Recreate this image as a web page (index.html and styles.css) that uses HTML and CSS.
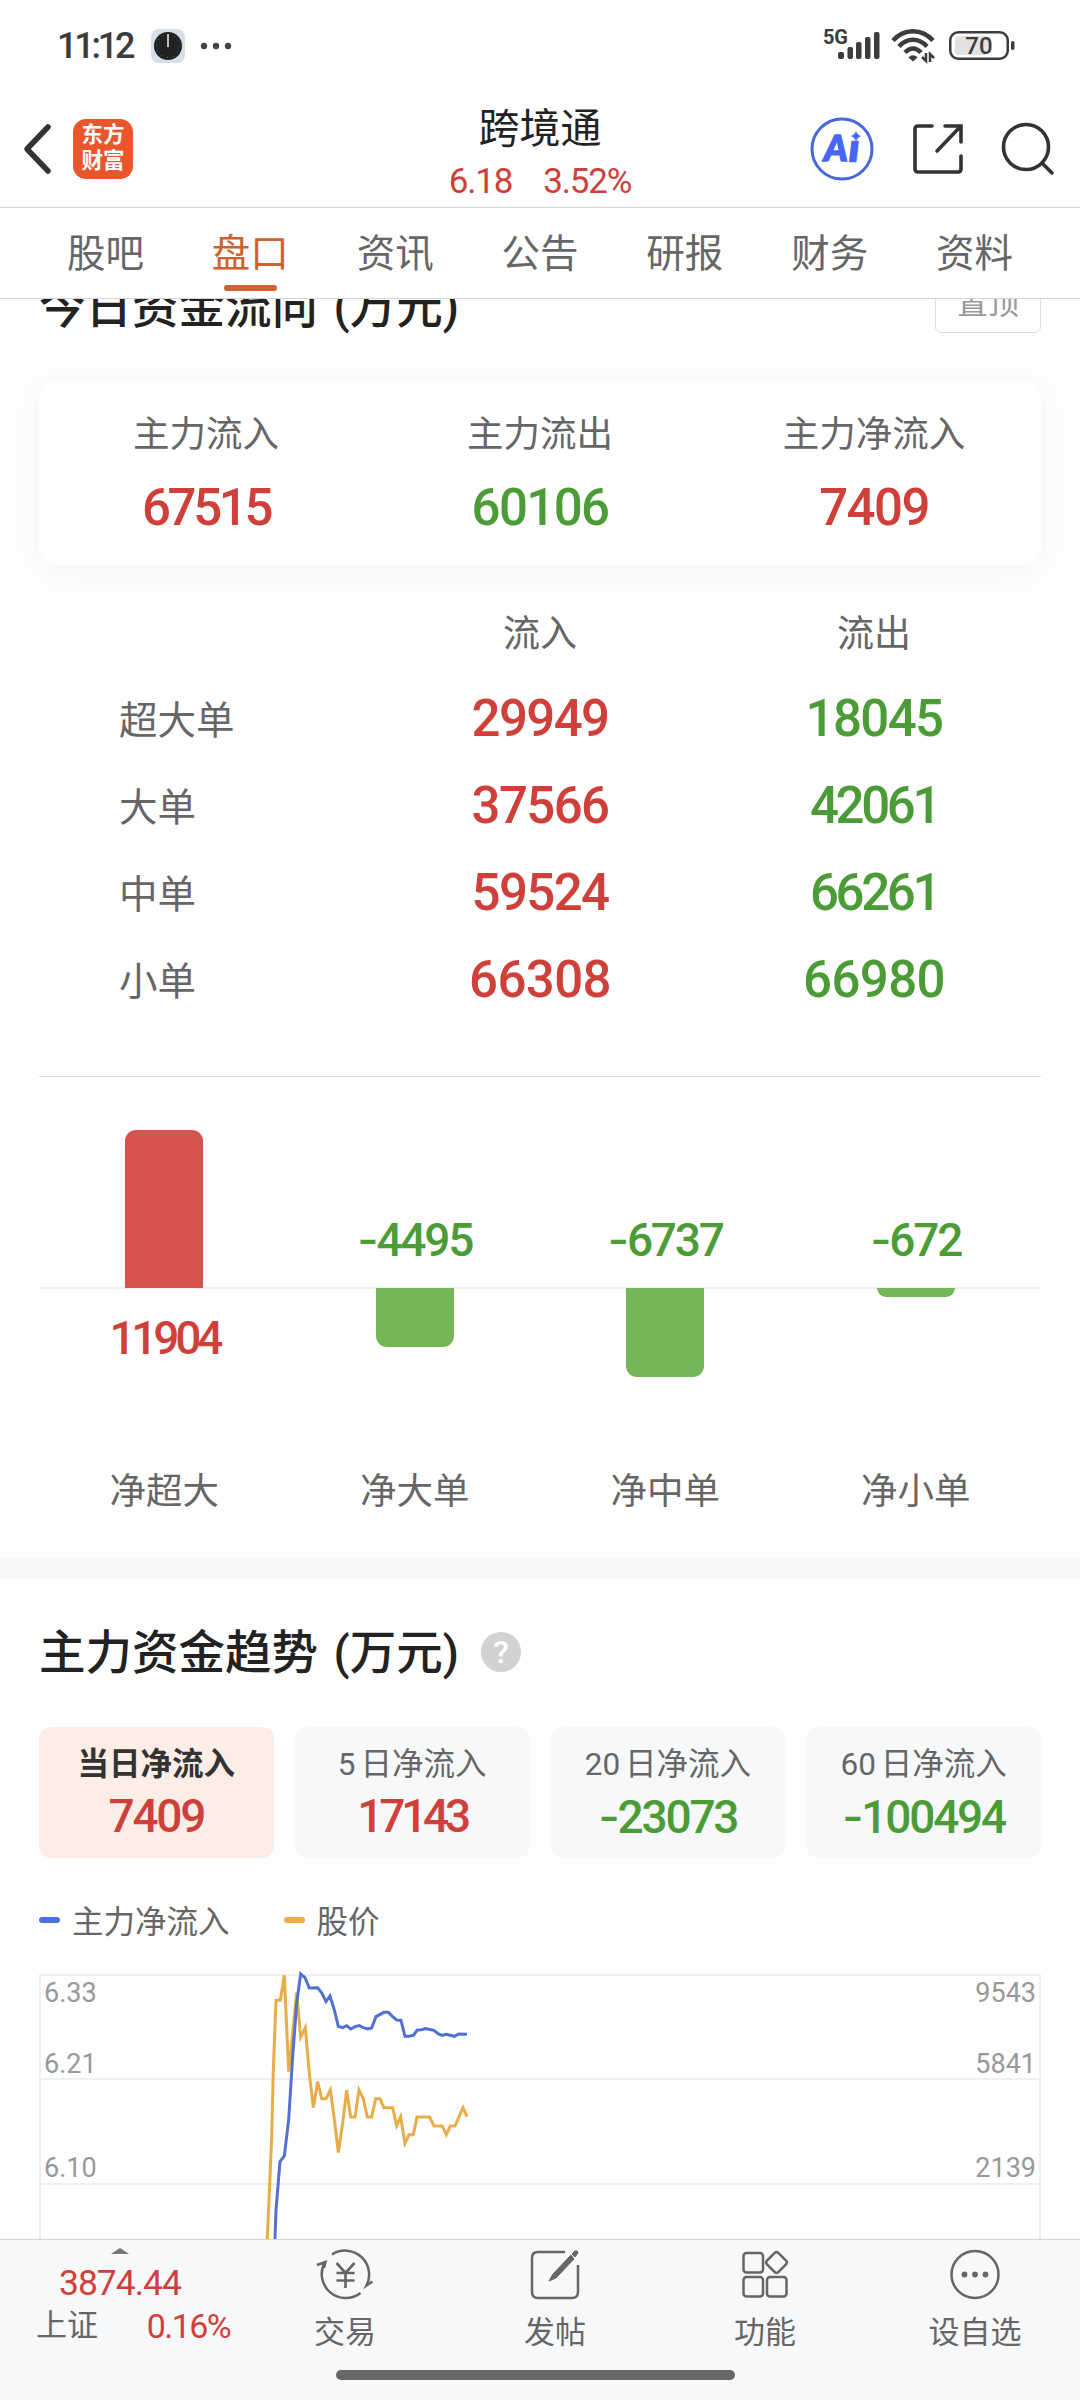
FILE: index.html
```html
<!DOCTYPE html>
<html lang="zh-CN">
<head>
 <meta charset="utf-8">
 <title>跨境通 盘口</title>
 <link rel="stylesheet" href="styles.css">
</head>
<body>
<div class="statusbar">
	<span class="clock">11:12</span>
	<svg class="clock_app" width="34" height="34" viewBox="0 0 34 34">
		<rect width="34" height="34" rx="8" fill="#d5deea"/>
		<circle cx="17" cy="17" r="14" fill="#222"/>
		<circle cx="17" cy="17" r="11.5" fill="none" stroke="#777" stroke-width="1" stroke-dasharray="1 5.02"/>
		<path d="M17 5v13" stroke="#bbb" stroke-width="2"/>
	</svg>
	<svg class="more_dots" width="32" height="8" viewBox="0 0 32 8" fill="#444"><circle cx="4" cy="4" r="3.2"/><circle cx="16" cy="4" r="3.2"/><circle cx="28" cy="4" r="3.2"/></svg>
	<div class="status_right">
		<span class="net">5G</span>
		<svg class="signal" width="42" height="28" viewBox="0 0 42 28" fill="#3c3c3c">
			<rect x="0" y="20" width="6" height="7" rx="2"/><rect x="9.500" y="15" width="5.500" height="12" rx="2"/><rect x="18" y="10" width="5.500" height="17" rx="2"/><rect x="27" y="5" width="5.500" height="22" rx="2"/><rect x="36" y="0" width="5.500" height="27" rx="2"/>
		</svg>
		<svg class="wifi" width="44" height="34" viewBox="0 0 44 34" fill="none" stroke="#3c3c3c" stroke-width="4.500">
			<path d="M2 11.500C13-1 31-1 42 11.500"/><path d="M8 17.500C16 8.500 28 8.500 36 17.500"/><path d="M14 23.500c5-5.500 11-5.500 16 0"/>
			<path d="M17.500 28.500c3-3 6-3 9 0L22 32.500z" fill="#3c3c3c" stroke="none"/>
			<path d="M35 24v8l-4-4M39 33v-8l4 4" stroke-width="2.500"/>
		</svg>
		<svg class="battery" width="66" height="30" viewBox="0 0 66 30">
			<rect x="6" y="5" width="33" height="19" rx="4" fill="#e2e2e2"/>
			<rect x="1.250" y="1.250" width="57.500" height="26.500" rx="8" fill="none" stroke="#3c3c3c" stroke-width="2.500"/>
			<rect x="62" y="10" width="3.500" height="9" rx="1.700" fill="#3c3c3c"/>
			<text x="30" y="22.500" text-anchor="middle" class="battery_text">70</text>
		</svg>
	</div>
</div>

<div class="header">
	<div class="header_left">
		<svg width="30" height="52" viewBox="0 0 30 52" fill="none" stroke="#333" stroke-width="5.500" stroke-linecap="round" stroke-linejoin="round"><path d="M26 4L5 26l21 22"/></svg>
		<div class="logo">东方<br>财富</div>
	</div>
	<div class="header_title">
		<div class="stock">跨境通</div>
		<div class="quote num red"><span>6.18</span><span>3.52%</span></div>
	</div>
	<div class="header_right">
		<svg width="64" height="64" viewBox="0 0 64 64">
			<circle cx="31" cy="32" r="30" fill="#fff" stroke="#4767dc" stroke-width="3"/>
			<text x="13" y="43.500" class="ai_text">A<tspan x="38.500" class="ai_i">ı</tspan></text>
			<path d="M45 14q1.300 4 5 5-3.700 1.300-5 5-1.300-3.700-5-5 3.700-1 5-5z" fill="#4767f0"/>
		</svg>
		<svg width="52" height="52" viewBox="0 0 52 52" fill="none" stroke="#333" stroke-width="3.600" stroke-linecap="round"><path d="M20 3H6Q3 3 3 6v40q0 3 3 3h40q3 0 3-3V33M33 3h16v16M48 4L25 28"/></svg>
		<svg width="54" height="54" viewBox="0 0 54 54" fill="none" stroke="#333" stroke-width="3.600" stroke-linecap="round"><circle cx="25" cy="25" r="22.500"/><path d="M41 41l10 10"/></svg>
	</div>
</div>

<div class="tabs">
	<div class="tab">股吧</div>
	<div class="tab active">盘口</div>
	<div class="tab">资讯</div>
	<div class="tab">公告</div>
	<div class="tab">研报</div>
	<div class="tab">财务</div>
	<div class="tab">资料</div>
</div>

<div class="content">
	<!-- 今日资金流向 -->
	<div class="section flow">
		<div class="flow_head">
			<div class="section_title">今日资金流向 (万元)</div>
			<div class="top_btn">置顶</div>
		</div>
		<div class="summary">
			<div class="summary_item"><div class="label">主力流入</div><div class="num big tight red">67515</div></div>
			<div class="summary_item"><div class="label">主力流出</div><div class="num big green">60106</div></div>
			<div class="summary_item"><div class="label">主力净流入</div><div class="num big red">7409</div></div>
		</div>
		<div class="orders">
			<div class="orders_head"></div><div class="orders_head">流入</div><div class="orders_head">流出</div>
			<div class="orders_name">超大单</div><div class="num big red">29949</div><div class="num big green">18045</div>
			<div class="orders_name">大单</div><div class="num big red">37566</div><div class="num big tight green">42061</div>
			<div class="orders_name">中单</div><div class="num big red">59524</div><div class="num big tight green">66261</div>
			<div class="orders_name">小单</div><div class="num big wide red">66308</div><div class="num big wide green">66980</div>
		</div>
		<div class="bars">
			<div class="bar_col">
				<div class="bar_up"><div class="bar bar_red" style="height:158px"></div></div>
				<div class="bar_down"><div class="num mid tight red">11904</div></div>
				<div class="label">净超大</div>
			</div>
			<div class="bar_col">
				<div class="bar_up"><div class="num mid green"><span class="minus">-</span>4495</div></div>
				<div class="bar_down"><div class="bar bar_green" style="height:59px"></div></div>
				<div class="label">净大单</div>
			</div>
			<div class="bar_col">
				<div class="bar_up"><div class="num mid green"><span class="minus">-</span>6737</div></div>
				<div class="bar_down"><div class="bar bar_green" style="height:89px"></div></div>
				<div class="label">净中单</div>
			</div>
			<div class="bar_col">
				<div class="bar_up"><div class="num mid green"><span class="minus">-</span>672</div></div>
				<div class="bar_down"><div class="bar bar_green" style="height:9px"></div></div>
				<div class="label">净小单</div>
			</div>
		</div>
	</div>

	<div class="split"></div>

	<!-- 主力资金趋势 -->
	<div class="section trend">
		<div class="trend_head">
			<div class="section_title">主力资金趋势 (万元)</div>
			<div class="help">?</div>
		</div>
		<div class="periods">
			<div class="period on"><div class="period_name">当日净流入</div><div class="num mid red">7409</div></div>
			<div class="period"><div class="period_name">5 日净流入</div><div class="num mid tight red">17143</div></div>
			<div class="period"><div class="period_name">20 日净流入</div><div class="num mid green"><span class="minus">-</span>23073</div></div>
			<div class="period"><div class="period_name">60 日净流入</div><div class="num mid green"><span class="minus">-</span>100494</div></div>
		</div>
		<div class="legend">
			<i class="dash blue"></i><span class="legend_flow">主力净流入</span>
			<i class="dash yellow"></i><span>股价</span>
		</div>
		<svg class="chart" width="1002" height="266" viewBox="0 0 1002 266">
			<path d="M1 266V1h1000v265M0 105h1002M0 210h1002" fill="none" stroke="#f0f0f0" stroke-width="2"/>
			<g class="axis">
				<text x="5" y="28">6.33</text><text x="5" y="99">6.21</text><text x="5" y="203">6.10</text>
				<text x="997" y="28" text-anchor="end">9543</text><text x="997" y="99" text-anchor="end">5841</text><text x="997" y="203" text-anchor="end">2139</text>
			</g>
			<g transform="translate(201 -14) scale(.3333)" fill="none" stroke-width="9">
				<polyline stroke="#e8ad49" points="80,860 82,836 88,700 95,530 100,330 108,121 121,121 133,46 146,335 158,220 170,97 182,232 196,203 208,340 220,443 233,365 245,416 258,416 271,390 283,478 295,578 308,490 320,391 332,471 345,471 357,390 370,416 382,471 395,471 407,416 420,416 432,443 458,443 470,497 482,470 495,550 507,524 520,524 531,471 569,471 582,498 607,498 619,524 631,498 645,498 669,443 681,470"/>
				<polyline stroke="#5272d3" points="104,860 105,836 108,750 120,605 133,588 146,480 158,290 170,130 182,42 195,53 208,84 233,83 246,100 258,125 270,108 283,150 295,199 308,203 320,197 332,207 345,200 358,197 370,203 383,207 395,204 408,170 432,157 445,157 458,170 470,180 483,181 495,229 507,229 520,226 532,210 545,209 557,206 582,211 595,222 607,226 619,223 644,229 656,222 681,223"/>
			</g>
		</svg>
	</div>
</div>

<div class="bottombar">
	<div class="index_box">
		<svg width="18" height="6" viewBox="0 0 18 6"><path d="M0 6L9 0l9 6z" fill="#747479"/></svg>
		<div class="num index_price red">3874.44</div>
		<div class="index_row"><span>上证</span><span class="num red index_pct">0.16%</span></div>
	</div>
	<div class="nav_item">
		<svg width="60" height="54" viewBox="0 0 60 54" fill="none" stroke="#666" stroke-width="2.500">
			<path d="M17 7.500A24 24 0 0 1 51.500 38.500l6-4M45.500 46A24 24 0 0 1 10 15M2 18l8.500-3-1.500 6"/>
			<path d="M21.500 16l9 10 9-10M30.500 26v15M21.500 26h18M21.500 33.500h18" stroke-width="2.700"/>
		</svg>
		<span>交易</span>
	</div>
	<div class="nav_item">
		<svg width="60" height="54" viewBox="0 0 60 54" fill="none" stroke="#666" stroke-width="2.500">
			<path d="M40 5H13q-6 0-6 6v34q0 6 6 6h34q6 0 6-6V18"/>
			<path d="M24 34l4-7 18-19 3 4-18 19zM47 7l3-3q3-1 3 2l-3 4z" fill="#666" stroke-width="1"/>
		</svg>
		<span>发帖</span>
	</div>
	<div class="nav_item">
		<svg width="60" height="54" viewBox="0 0 60 54" fill="none" stroke="#666" stroke-width="2.500">
			<rect x="8.500" y="6" width="19.500" height="19.500" rx="3"/><rect x="8.500" y="30" width="19.500" height="19.500" rx="3"/><rect x="32" y="30" width="19.500" height="19.500" rx="3"/>
			<rect x="33.500" y="7.500" width="16" height="16" rx="2.500" transform="rotate(45 41.500 15.500)"/>
		</svg>
		<span>功能</span>
	</div>
	<div class="nav_item">
		<svg width="60" height="54" viewBox="0 0 60 54" fill="none" stroke="#666" stroke-width="2.500">
			<circle cx="30" cy="27.500" r="23.500"/>
			<g fill="#666" stroke="none"><circle cx="19.500" cy="27.500" r="2.900"/><circle cx="30" cy="27.500" r="2.900"/><circle cx="40.500" cy="27.500" r="2.900"/></g>
		</svg>
		<span>设自选</span>
	</div>
	<div class="home_bar"></div>
</div>
</body>
</html>
```
FILE: styles.css
```css
* { box-sizing: border-box; }

body {
	margin: 0;
	width: 1080px;
	height: 2400px;
	overflow: hidden;
	display: flex;
	flex-direction: column;
	background: #fefefe;
	color: #666;
	font-family: Roboto, "Noto Sans CJK SC", sans-serif;
}

svg { display: block; flex: none; overflow: visible; }

.num { font-family: Roboto, "Noto Sans CJK SC", sans-serif; font-weight: 500; white-space: nowrap; }
.big { font-size: 51px; letter-spacing: -1.6px; }
.mid { font-size: 46px; letter-spacing: -2.2px; }
.big.tight { letter-spacing: -3.4px; }
.big.wide { letter-spacing: -.6px; }
.mid.tight { letter-spacing: -4.2px; }
.minus { font-family: Inter, sans-serif; }
.red { color: #d0403a; }
.green { color: #4b9c36; }
.label { font-size: 36.5px; }

/* status bar */
.statusbar {
	flex: none;
	height: 92px;
	padding: 0 65px 0 57px;
	display: flex;
	align-items: center;
}
.clock { width: 94px; font-size: 36px; font-weight: 500; letter-spacing: -3.2px; color: #3c3c3c; }
.more_dots { margin-left: 15px; }
.status_right { margin-left: auto; display: flex; align-items: center; }
.net { align-self: flex-start; margin-top: -4px; font-size: 20px; line-height: 24px; font-weight: 700; color: #3c3c3c; }
.signal { margin-left: -10px; }
.wifi { margin-left: 11px; }
.battery { margin-left: 14px; }
.battery_text { font-size: 24px; font-weight: 500; fill: #3c3c3c; }

/* header */
.header {
	flex: none;
	height: 116px;
	border-bottom: 1px solid #d4d6d6;
	display: grid;
	grid-template-columns: 300px 1fr 300px;
}
.header_left { display: flex; align-items: center; padding: 0 0 2px 22px; }
.logo {
	width: 60px;
	height: 60px;
	margin-left: 21px;
	padding-top: 3px;
	border-radius: 13px;
	background: #e9562b;
	color: #fff;
	font-size: 21.5px;
	line-height: 26px;
	font-weight: 700;
	text-align: center;
}
.header_title { text-align: center; }
.stock { padding-top: 7px; font-size: 41px; line-height: 60px; color: #222; }
.quote { font-size: 35px; line-height: 46px; letter-spacing: -1.2px; font-weight: 400; display: flex; justify-content: center; gap: 31px; }
.header_right { display: flex; align-items: center; justify-content: flex-end; gap: 37px; padding: 0 25px 2px 0; }
.ai_text { font-family: Lato, sans-serif; font-size: 36px; font-weight: 900; font-style: italic; fill: #4767f0; stroke: #4767f0; stroke-width: 1.5px; }
.ai_i { stroke-width: 2.5px; }

/* tabs */
.tabs {
	flex: none;
	height: 91px;
	padding: 0 33px;
	display: flex;
	border-bottom: 1px solid #d4d6d6;
}
.tab { flex: 1; display: flex; flex-direction: column; align-items: center; font-size: 38.5px; line-height: 56px; padding-top: 18px; }
.active { color: #cb6230; }
.active::after { content: ""; width: 53px; height: 6px; margin-top: 3px; border-radius: 3px; background: #cb6230; }

/* scrolled content */
.content { flex: 1; min-height: 0; overflow: hidden; }
.section { padding: 0 39px; }
.section_title { font-size: 46.5px; line-height: 60px; font-weight: 500; word-spacing: 4px; color: #222; white-space: nowrap; }

.flow_head { display: flex; justify-content: space-between; margin-top: -22px; height: 104px; }
.top_btn { width: 106px; height: 56px; border: 1px solid #dedede; border-radius: 6px; color: #999; font-size: 31px; line-height: 52px; text-align: center; }
.summary {
	height: 184px;
	border-radius: 16px;
	background: #fff;
	box-shadow: 0 6px 40px rgba(0, 0, 0, .045);
	display: flex;
}
.summary_item { flex: 1; text-align: center; padding-top: 27px; }
.summary_item .label { line-height: 54px; }
.summary_item .num { line-height: 60px; margin-top: 16px; }

.orders {
	height: 512px;
	padding-top: 35px;
	border-bottom: 1px solid #dfe0e1;
	display: grid;
	grid-template-columns: repeat(3, 1fr);
	grid-template-rows: 75px repeat(4, 87px);
	text-align: center;
}
.orders_head { font-size: 37px; line-height: 70px; }
.orders_name { padding: 2px 0 0 80px; text-align: left; font-size: 38.5px; line-height: 87px; }
.orders .num { line-height: 87px; }

.bars { display: flex; height: 481px; background: linear-gradient(#f0f0f0, #f0f0f0) 0 210px / 100% 2px no-repeat; }
.bar_col { flex: 1; display: flex; flex-direction: column; align-items: center; }
.bar_up { height: 211px; display: flex; align-items: flex-end; }
.bar_up .num { line-height: 60px; margin-bottom: 18px; }
.bar_down { height: 176px; }
.bar_down .num { line-height: 60px; padding-top: 20px; }
.bar { width: 78px; }
.bar_red { background: #d7534e; border-radius: 11px 11px 0 0; }
.bar_green { background: #74b756; border-radius: 0 0 11px 11px; }
.bar_col .label { line-height: 56px; }

.split { height: 21px; background: #f7f8fa; }

.trend_head { display: flex; align-items: flex-start; padding-top: 44px; height: 148px; }
.help { width: 40px; height: 40px; margin: 9px 0 0 22px; border-radius: 50%; background: #d2d2d4; color: #fff; font-size: 32px; line-height: 41px; font-weight: 500; text-align: center; }
.periods { display: grid; grid-template-columns: repeat(4, 1fr); gap: 21px; }
.period { height: 131px; padding-top: 14px; border-radius: 12px; background: #f7f8fa; text-align: center; }
.period_name { font-size: 31.5px; line-height: 48px; word-spacing: -3px; }
.period .num { line-height: 54px; }
.on { background: #fcede7; }
.on .period_name { color: #333; font-weight: 700; }

.legend { height: 116px; padding-top: 8px; display: flex; align-items: center; font-size: 31.5px; }
.legend span { margin-top: -2px; }
.dash { width: 21px; height: 6px; margin-right: 12px; border-radius: 3px; }
.legend_flow { margin-right: 54px; }
.blue { background: #4a70e2; }
.yellow { background: #eeae45; }
.axis { font-size: 27px; fill: #999; }

/* bottom bar */
.bottombar {
	position: relative;
	flex: none;
	height: 161px;
	border-top: 1px solid #d0d4d7;
	background: #f7f8fa;
	display: flex;
}
.index_box { width: 240px; padding-top: 8px; display: flex; flex-direction: column; align-items: center; }
.index_price { font-size: 35.5px; line-height: 44px; letter-spacing: -1px; font-weight: 400; margin-top: 7px; }
.index_row { display: flex; align-items: center; width: 240px; padding: 0 10px 0 36px; justify-content: space-between; font-size: 31px; line-height: 42px; }
.index_pct { font-size: 34px; font-weight: 400; letter-spacing: -1.6px; }
.nav_item { width: 210px; padding-top: 7px; display: flex; flex-direction: column; align-items: center; font-size: 31px; line-height: 46px; }
.nav_item span { margin-top: 9px; }
.home_bar { position: absolute; left: 336px; bottom: 20px; width: 399px; height: 10px; border-radius: 5px; background: #666867; }
```
